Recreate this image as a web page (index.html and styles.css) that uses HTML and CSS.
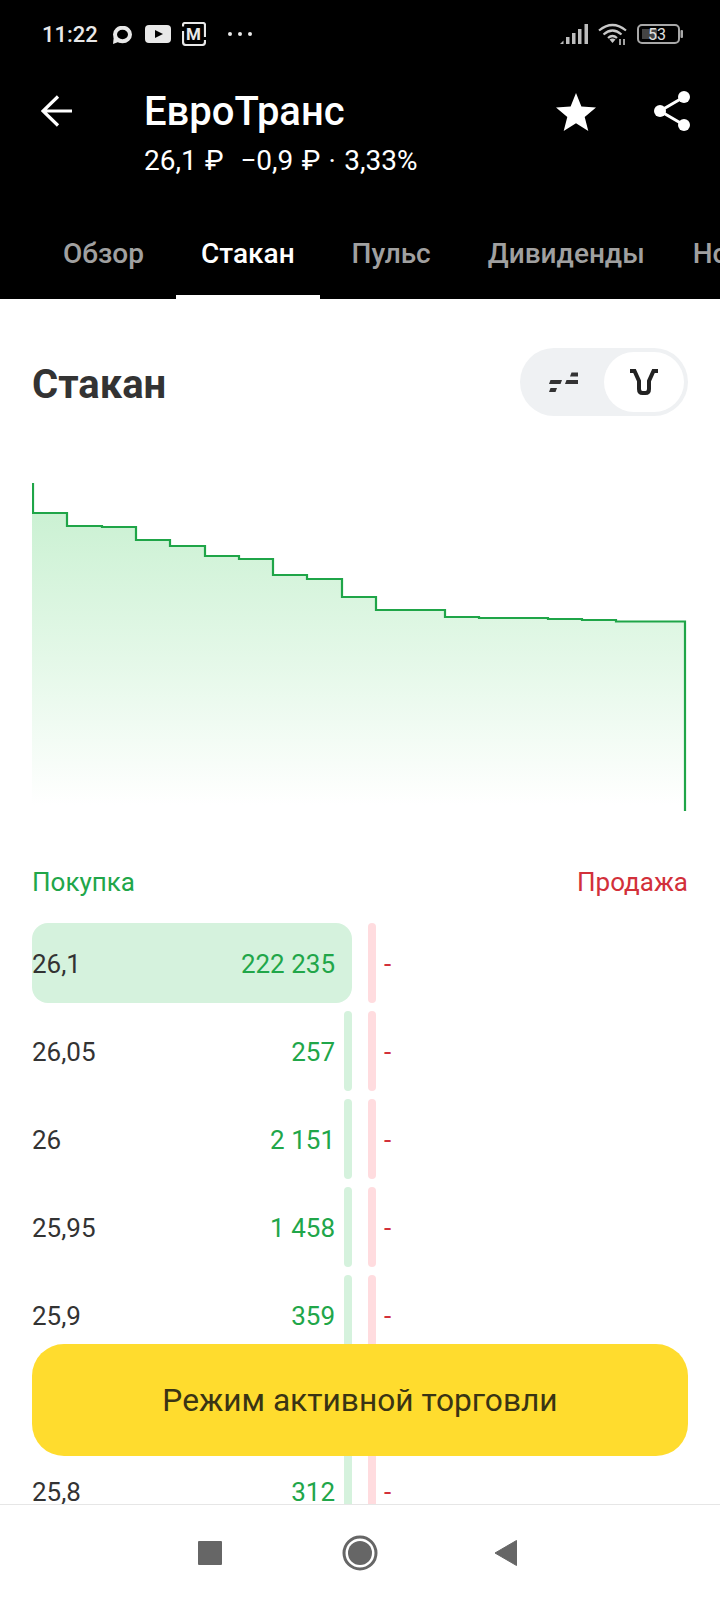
FILE: index.html
```html
<!DOCTYPE html>
<html lang="ru">
<head>
    <meta charset="UTF-8">
    <title>ЕвроТранс</title>
    <link rel="stylesheet" href="styles.css">
</head>
<body>
    <div class="screen">
        <header class="header">
            <div class="status-bar">
                <div class="status-group">
                    <span class="clock">11:22</span>
                    <svg class="st-chat" width="20" height="18" viewBox="0 0 20 18"><ellipse cx="10.500" cy="8.500" rx="7.500" ry="6.800" fill="none" stroke="#e8e8e8" stroke-width="4"/><path d="M1 18 L2 9 L9 15 Z" fill="#e8e8e8"/></svg>
                    <svg class="st-yt" width="26" height="18" viewBox="0 0 26 18"><rect width="26" height="18" rx="4" fill="#e8e8e8"/><path d="M10 5 L18 9 L10 13 Z" fill="#000"/></svg>
                    <svg class="st-m" width="24" height="24" viewBox="0 0 24 24"><path d="M1 4.500 V3 Q1 1 3 1 H21 Q23 1 23 3 V15" fill="none" stroke="#e8e8e8" stroke-width="2.200"/><path d="M1 9 V20 Q1 23 4 23 H20 Q23 23 23 20 V18" fill="none" stroke="#e8e8e8" stroke-width="2.200"/><text x="11.500" y="17.500" class="st-m-text" text-anchor="middle">М</text></svg>
                    <div class="st-dots"><i></i><i></i><i></i></div>
                </div>
                <div class="status-group status-right">
                    <svg width="28" height="20" viewBox="0 0 28 20" fill="#bdbdbd"><path d="M0 20 L3.500 16.500 V20 Z"/><rect x="6" y="13" width="3.500" height="7"/><rect x="12" y="9" width="3.500" height="11"/><rect x="18" y="5" width="3.500" height="15"/><rect x="24.500" y="0" width="3.500" height="20"/></svg>
                    <svg width="29" height="22" viewBox="0 0 29 22" fill="none" stroke="#c8c8c8" stroke-width="2.200"><path d="M1 7.500 Q14.500 -3.500 28 7.500"/><path d="M5.500 11.500 Q14.500 3.500 23.500 11.500"/><path d="M10 15 Q14.500 11 19 15"/><path d="M14.500 20 L11.500 16.500 Q14.500 14.500 17.500 16.500 Z" fill="#c8c8c8" stroke="none"/><path d="M22 16 V22 M26 16 V22" stroke-width="1.600"/></svg>
                    <svg width="46" height="20" viewBox="0 0 46 20"><rect x="1" y="1" width="41" height="18" rx="4" fill="none" stroke="#a8a8a8" stroke-width="2"/><rect x="5" y="5" width="15" height="10" fill="#444"/><rect x="43.500" y="6" width="2.500" height="8" rx="1" fill="#a8a8a8"/><text x="20" y="15.500" class="batt-text" text-anchor="middle">53</text></svg>
                </div>
            </div>

            <div class="toolbar">
                <svg class="back" width="32" height="32" viewBox="0 0 32 32" fill="none" stroke="#fff" stroke-width="3.200"><path d="M31 16 H2 M17 1.500 L2 16 L17 30.500"/></svg>
                <div class="ticker">
                    <div class="ticker-name">ЕвроТранс</div>
                    <div class="ticker-price">26,1 ₽ &nbsp;−0,9 ₽ · 3,33%</div>
                </div>
                <svg class="star" width="40" height="38" viewBox="0 0 40 38"><path d="M20 0 L25.400 13.600 L40 14.600 L28.700 24 L32.300 38 L20 30.200 L7.700 38 L11.300 24 L0 14.600 L14.600 13.600 Z" fill="#fff"/></svg>
                <svg class="share" width="36" height="40" viewBox="0 0 36 40"><path d="M30 6 L6 20 L30 34" fill="none" stroke="#fff" stroke-width="3"/><circle cx="30" cy="6" r="6" fill="#fff"/><circle cx="6" cy="20" r="6" fill="#fff"/><circle cx="30" cy="34" r="6" fill="#fff"/></svg>
            </div>

            <nav class="tabs">
                <div class="tab">Обзор</div>
                <div class="tab active">Стакан</div>
                <div class="tab">Пульс</div>
                <div class="tab">Дивиденды</div>
                <div class="tab">Новости</div>
            </nav>
        </header>

        <main class="content">
            <div class="section-head">
                <h1>Стакан</h1>
                <div class="toggle">
                    <div class="toggle-item">
                        <svg width="30" height="20" viewBox="0 0 30 20" fill="#333"><path d="M1.500 8 H13 L11.500 12 H0 Z"/><path d="M1.500 16 H8 L6.500 20 H0 Z"/><path d="M17.500 8 H29 V12 H16 Z"/><path d="M22.500 0.500 H29 V4.500 H21 Z"/></svg>
                    </div>
                    <div class="toggle-item on">
                        <svg width="30" height="28" viewBox="0 0 30 28" fill="none" stroke="#222" stroke-width="4"><path d="M1 3 H5.500 L10 13 V21 Q10 25 13.500 25 H16.500 Q20 25 20 21 V13 L24.500 3 H29"/></svg>
                    </div>
                </div>
            </div>

            <svg class="chart" width="656" height="350" viewBox="32 470 656 350">
                <defs>
                    <linearGradient id="depthFill" x1="0" y1="0" x2="0" y2="1">
                        <stop offset="0" stop-color="#cbf1d3"/>
                        <stop offset="0.500" stop-color="#e4f8e8"/>
                        <stop offset="1" stop-color="#ffffff"/>
                    </linearGradient>
                </defs>
                <path d="M32 513 H67 V526 H102 V527 H136 V540 H170 V546 H205 V556 H239 V559 H273 V575 H307 V579 H342 V597 H376 V610 H445 V617 H479 V618 H548 V619 H582 V620 H616 V621.500 H685 V805 H32 Z" fill="url(#depthFill)"/>
                <path d="M33 483 V513 H67 V526 H102 V527 H136 V540 H170 V546 H205 V556 H239 V559 H273 V575 H307 V579 H342 V597 H376 V610 H445 V617 H479 V618 H548 V619 H582 V620 H616 V621.500 H685 V811" fill="none" stroke="#1fa548" stroke-width="2.200"/>
            </svg>

            <div class="side-labels">
                <span class="buy-label">Покупка</span>
                <span class="sell-label">Продажа</span>
            </div>

            <div class="book">
                <div class="row">
                    <div class="buy"><div class="depth full"></div><span class="price">26,1</span><span class="qty">222 235</span></div>
                    <div class="sell-bar"></div><span class="sell-qty">-</span>
                </div>
                <div class="row">
                    <div class="buy"><div class="depth"></div><span class="price">26,05</span><span class="qty">257</span></div>
                    <div class="sell-bar"></div><span class="sell-qty">-</span>
                </div>
                <div class="row">
                    <div class="buy"><div class="depth"></div><span class="price">26</span><span class="qty">2 151</span></div>
                    <div class="sell-bar"></div><span class="sell-qty">-</span>
                </div>
                <div class="row">
                    <div class="buy"><div class="depth"></div><span class="price">25,95</span><span class="qty">1 458</span></div>
                    <div class="sell-bar"></div><span class="sell-qty">-</span>
                </div>
                <div class="row">
                    <div class="buy"><div class="depth"></div><span class="price">25,9</span><span class="qty">359</span></div>
                    <div class="sell-bar"></div><span class="sell-qty">-</span>
                </div>
                <div class="row">
                    <div class="buy"><div class="depth"></div></div>
                    <div class="sell-bar"></div>
                </div>
                <div class="row">
                    <div class="buy"><div class="depth"></div><span class="price">25,8</span><span class="qty">312</span></div>
                    <div class="sell-bar"></div><span class="sell-qty">-</span>
                </div>
            </div>
        </main>

        <button class="trade-btn">Режим активной торговли</button>

        <footer class="nav-bar">
            <svg width="40" height="40" viewBox="0 0 40 40"><rect x="8" y="8" width="24" height="24" rx="1" fill="#666"/></svg>
            <svg width="40" height="40" viewBox="0 0 40 40"><circle cx="20" cy="20" r="16" fill="none" stroke="#666" stroke-width="3"/><circle cx="20" cy="20" r="12" fill="#666"/></svg>
            <svg width="40" height="40" viewBox="0 0 40 40"><path d="M5 20 L26.500 7.500 V32.500 Z" fill="#666" stroke="#666" stroke-linejoin="round"/></svg>
        </footer>
    </div>
</body>
</html>
```

FILE: styles.css
```css
* {
    box-sizing: border-box;
}

html, body {
    margin: 0;
    padding: 0;
    background: #fff;
}

.screen {
    position: relative;
    width: 720px;
    height: 1600px;
    display: flex;
    flex-direction: column;
    overflow: hidden;
    font-family: Roboto, "Noto Sans", sans-serif;
    color: #333;
}

/* header */

.header {
    background: #000;
    color: #fff;
}

.status-bar {
    height: 68px;
    padding: 0 37px 0 42px;
    display: flex;
    align-items: center;
    justify-content: space-between;
}

.status-group {
    display: flex;
    align-items: center;
}

.status-right {
    gap: 10px;
}

.clock {
    font-size: 22px;
    font-weight: 500;
    color: #e8e8e8;
}

.st-chat {
    margin-left: 14px;
    margin-top: 2px;
}

.st-yt {
    margin-left: 13px;
}

.st-m {
    margin-left: 11px;
}

.st-m-text {
    font-family: Roboto, sans-serif;
    font-size: 17px;
    font-weight: 700;
    fill: #e8e8e8;
}

.st-dots {
    margin-left: 22px;
    display: flex;
    gap: 6px;
}

.st-dots i {
    width: 4px;
    height: 4px;
    border-radius: 50%;
    background: #e8e8e8;
}

.batt-text {
    font-family: Roboto, sans-serif;
    font-size: 16px;
    fill: #e0e0e0;
}

.toolbar {
    height: 139px;
    padding: 0 30px 0 41px;
    display: flex;
    align-items: flex-start;
}

.back {
    margin-top: 27px;
}

.ticker {
    flex: 1;
    margin-left: 71px;
    padding-top: 21px;
}

.ticker-name {
    font-size: 40px;
    line-height: 46px;
    font-weight: 500;
}

.ticker-price {
    margin-top: 10px;
    font-size: 28px;
    line-height: 32px;
    word-spacing: 1.4px;
}

.star {
    margin-top: 25px;
}

.share {
    margin-top: 23px;
    margin-left: 58px;
}

.tabs {
    height: 92px;
    padding-left: 38px;
    display: flex;
    gap: 7px;
    white-space: nowrap;
}

.tab {
    position: relative;
    flex: none;
    padding: 0 25px;
    display: flex;
    align-items: center;
    font-size: 28px;
    font-weight: 500;
    color: #a0a0a0;
}

.tab:last-child {
    margin-left: -9px;
}

.tab.active {
    color: #fff;
}

.tab.active::after {
    content: "";
    position: absolute;
    left: 0;
    right: 0;
    bottom: 0;
    height: 4px;
    background: #fff;
}

/* content */

.content {
    flex: 1;
    min-height: 0;
    overflow: hidden;
    padding: 49px 32px 0;
}

.section-head {
    display: flex;
    align-items: center;
    justify-content: space-between;
}

.section-head h1 {
    margin: 4px 0 0;
    font-size: 40px;
    font-weight: 700;
    color: #333;
}

.toggle {
    width: 168px;
    height: 68px;
    padding: 4px;
    display: flex;
    border-radius: 34px;
    background: #eff1f3;
}

.toggle-item {
    flex: 1;
    display: flex;
    align-items: center;
    justify-content: center;
    border-radius: 30px;
}

.toggle-item.on {
    background: #fff;
}

.chart {
    display: block;
    margin-top: 54px;
}

.side-labels {
    margin-top: 48px;
    display: flex;
    justify-content: space-between;
    font-size: 26px;
    line-height: 28px;
}

.buy-label {
    color: #21a649;
}

.sell-label {
    color: #d2303a;
}

.book {
    margin-top: 27px;
    display: flex;
    flex-direction: column;
    gap: 8px;
}

.row {
    height: 80px;
    flex: none;
    display: flex;
    align-items: center;
    font-size: 26px;
}

.buy {
    position: relative;
    width: 320px;
    height: 100%;
    padding: 2px 17px 0 0;
    display: flex;
    align-items: center;
    justify-content: space-between;
}

.depth {
    position: absolute;
    top: 0;
    right: 0;
    bottom: 0;
    width: 8px;
    border-radius: 4px;
    background: #d5f2dd;
}

.depth.full {
    width: 100%;
    border-radius: 16px;
}

.price {
    position: relative;
    color: #333;
}

.qty {
    position: relative;
    color: #21a649;
}

.sell-bar {
    width: 8px;
    height: 100%;
    margin-left: 16px;
    border-radius: 4px;
    background: #ffdcdf;
}

.sell-qty {
    margin: 2px 0 0 8px;
    color: #d2303a;
}

.trade-btn {
    position: absolute;
    left: 32px;
    top: 1344px;
    width: 656px;
    height: 112px;
    border: none;
    border-radius: 32px;
    background: #ffdc2e;
    font-family: inherit;
    font-size: 31.7px;
    color: #3a3414;
}

.nav-bar {
    height: 96px;
    flex: none;
    padding-left: 190px;
    display: flex;
    align-items: center;
    gap: 110px;
    background: #fff;
    border-top: 1px solid #e6e6e6;
}
```
